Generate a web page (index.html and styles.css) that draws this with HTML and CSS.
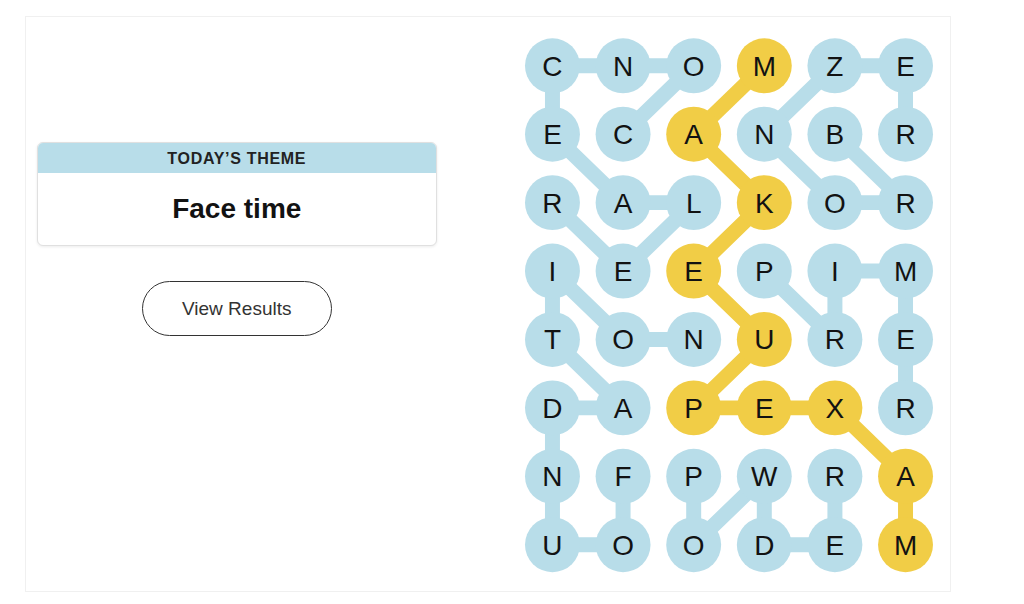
FILE: index.html
```html
<!DOCTYPE html>
<html lang="en">
<head>
    <meta charset="UTF-8">
    <meta name="viewport" content="width=device-width, initial-scale=1.0">
    <title>Strands</title>
    <link rel="stylesheet" href="styles.css">
</head>
<body>
    <div class="board">
        <div class="side">
            <div class="theme-card">
                <div class="theme-label">TODAY’S THEME</div>
                <div class="theme-name">Face time</div>
            </div>
            <div class="button-container">
                <button type="button" class="results-btn">View Results</button>
            </div>
        </div>
        <svg id="grid" class="grid" width="420" height="550" viewBox="0 0 420 550"></svg>
    </div>
    <script>
        const letters = [
            'CNOMZE',
            'ECANBR',
            'RALKOR',
            'IEEPIM',
            'TONURE',
            'DAPEXR',
            'NFPWRA',
            'UOODEM'
        ];
        // words as paths of [row, col]
        const words = [
            { cls: 'found', path: [[1,1],[0,2],[0,1],[0,0],[1,0],[2,1],[2,2],[3,1],[2,0]] },
            { cls: 'found', path: [[1,4],[2,5],[2,4],[1,3],[0,4],[0,5],[1,5]] },
            { cls: 'found', path: [[3,3],[4,4],[3,4],[3,5],[4,5],[5,5]] },
            { cls: 'found', path: [[6,1],[7,1],[7,0],[6,0],[5,0],[5,1],[4,0],[3,0],[4,1],[4,2]] },
            { cls: 'found', path: [[6,2],[7,2],[6,3],[7,3],[7,4],[6,4]] },
            { cls: 'spangram', path: [[0,3],[1,2],[2,3],[3,2],[4,3],[5,2],[5,3],[5,4],[6,5],[7,5]] }
        ];

        const svg = document.getElementById('grid');
        const ns = 'http://www.w3.org/2000/svg';
        const cx = c => 32.5 + c * 70.7;
        const cy = r => 35.5 + r * 68.5;
        const owner = {};

        words.forEach(word => {
            word.path.forEach(([r, c], i) => {
                owner[r + '-' + c] = word.cls;
                if (i === 0) return;
                const [pr, pc] = word.path[i - 1];
                const line = document.createElementNS(ns, 'line');
                line.setAttribute('x1', cx(pc));
                line.setAttribute('y1', cy(pr));
                line.setAttribute('x2', cx(c));
                line.setAttribute('y2', cy(r));
                line.setAttribute('class', 'link ' + word.cls);
                svg.appendChild(line);
            });
        });

        letters.forEach((row, r) => {
            row.split('').forEach((ch, c) => {
                const circle = document.createElementNS(ns, 'circle');
                circle.setAttribute('cx', cx(c));
                circle.setAttribute('cy', cy(r));
                circle.setAttribute('r', 27.5);
                circle.setAttribute('class', 'cell ' + (owner[r + '-' + c] || ''));
                svg.appendChild(circle);

                const text = document.createElementNS(ns, 'text');
                text.setAttribute('x', cx(c));
                text.setAttribute('y', cy(r) + 10);
                text.setAttribute('class', 'letter');
                text.textContent = ch;
                svg.appendChild(text);
            });
        });
    </script>
</body>
</html>
```

FILE: styles.css
```css
body {
    font-family: "Liberation Sans", Arial, sans-serif;
    background: #fff;
    color: #121212;
    margin: 0;
    padding: 16px 0 0 25px;
}
.board {
    display: flex;
    align-items: flex-start;
    box-sizing: border-box;
    width: 926px;
    height: 576px;
    padding: 0 11px;
    border: 1px solid #f0f0f0;
}
.side {
    width: 400px;
    padding-top: 125px;
}
.theme-card {
    border: 1px solid #e0e0e0;
    border-radius: 6px;
    overflow: hidden;
    box-shadow: 0 1px 3px rgba(0, 0, 0, 0.08);
    background: #fff;
}
.theme-label {
    height: 30px;
    line-height: 31px;
    background-color: #b8dde9;
    text-align: center;
    font-size: 16px;
    font-weight: bold;
    letter-spacing: 0.7px;
    color: #222;
}
.theme-name {
    height: 72px;
    display: flex;
    align-items: center;
    justify-content: center;
    font-size: 28px;
    font-weight: bold;
    color: #121212;
}
.button-container {
    text-align: center;
    margin-top: 35px;
}
.results-btn {
    width: 190px;
    height: 55px;
    background: #fff;
    border: 1px solid #333;
    border-radius: 28px;
    font-family: "Liberation Sans", Arial, sans-serif;
    font-size: 19px;
    color: #333;
    cursor: pointer;
}
.grid {
    display: block;
    margin-top: 13px;
    margin-left: 83px;
}
.link {
    stroke-width: 15;
    stroke-linecap: round;
}
.link.found {
    stroke: #b8dde9;
}
.link.spangram {
    stroke: #f1cd46;
}
.cell.found {
    fill: #b8dde9;
}
.cell.spangram {
    fill: #f1cd46;
}
.letter {
    font-family: "Liberation Sans", Arial, sans-serif;
    font-size: 28px;
    fill: #121212;
    text-anchor: middle;
}
```
